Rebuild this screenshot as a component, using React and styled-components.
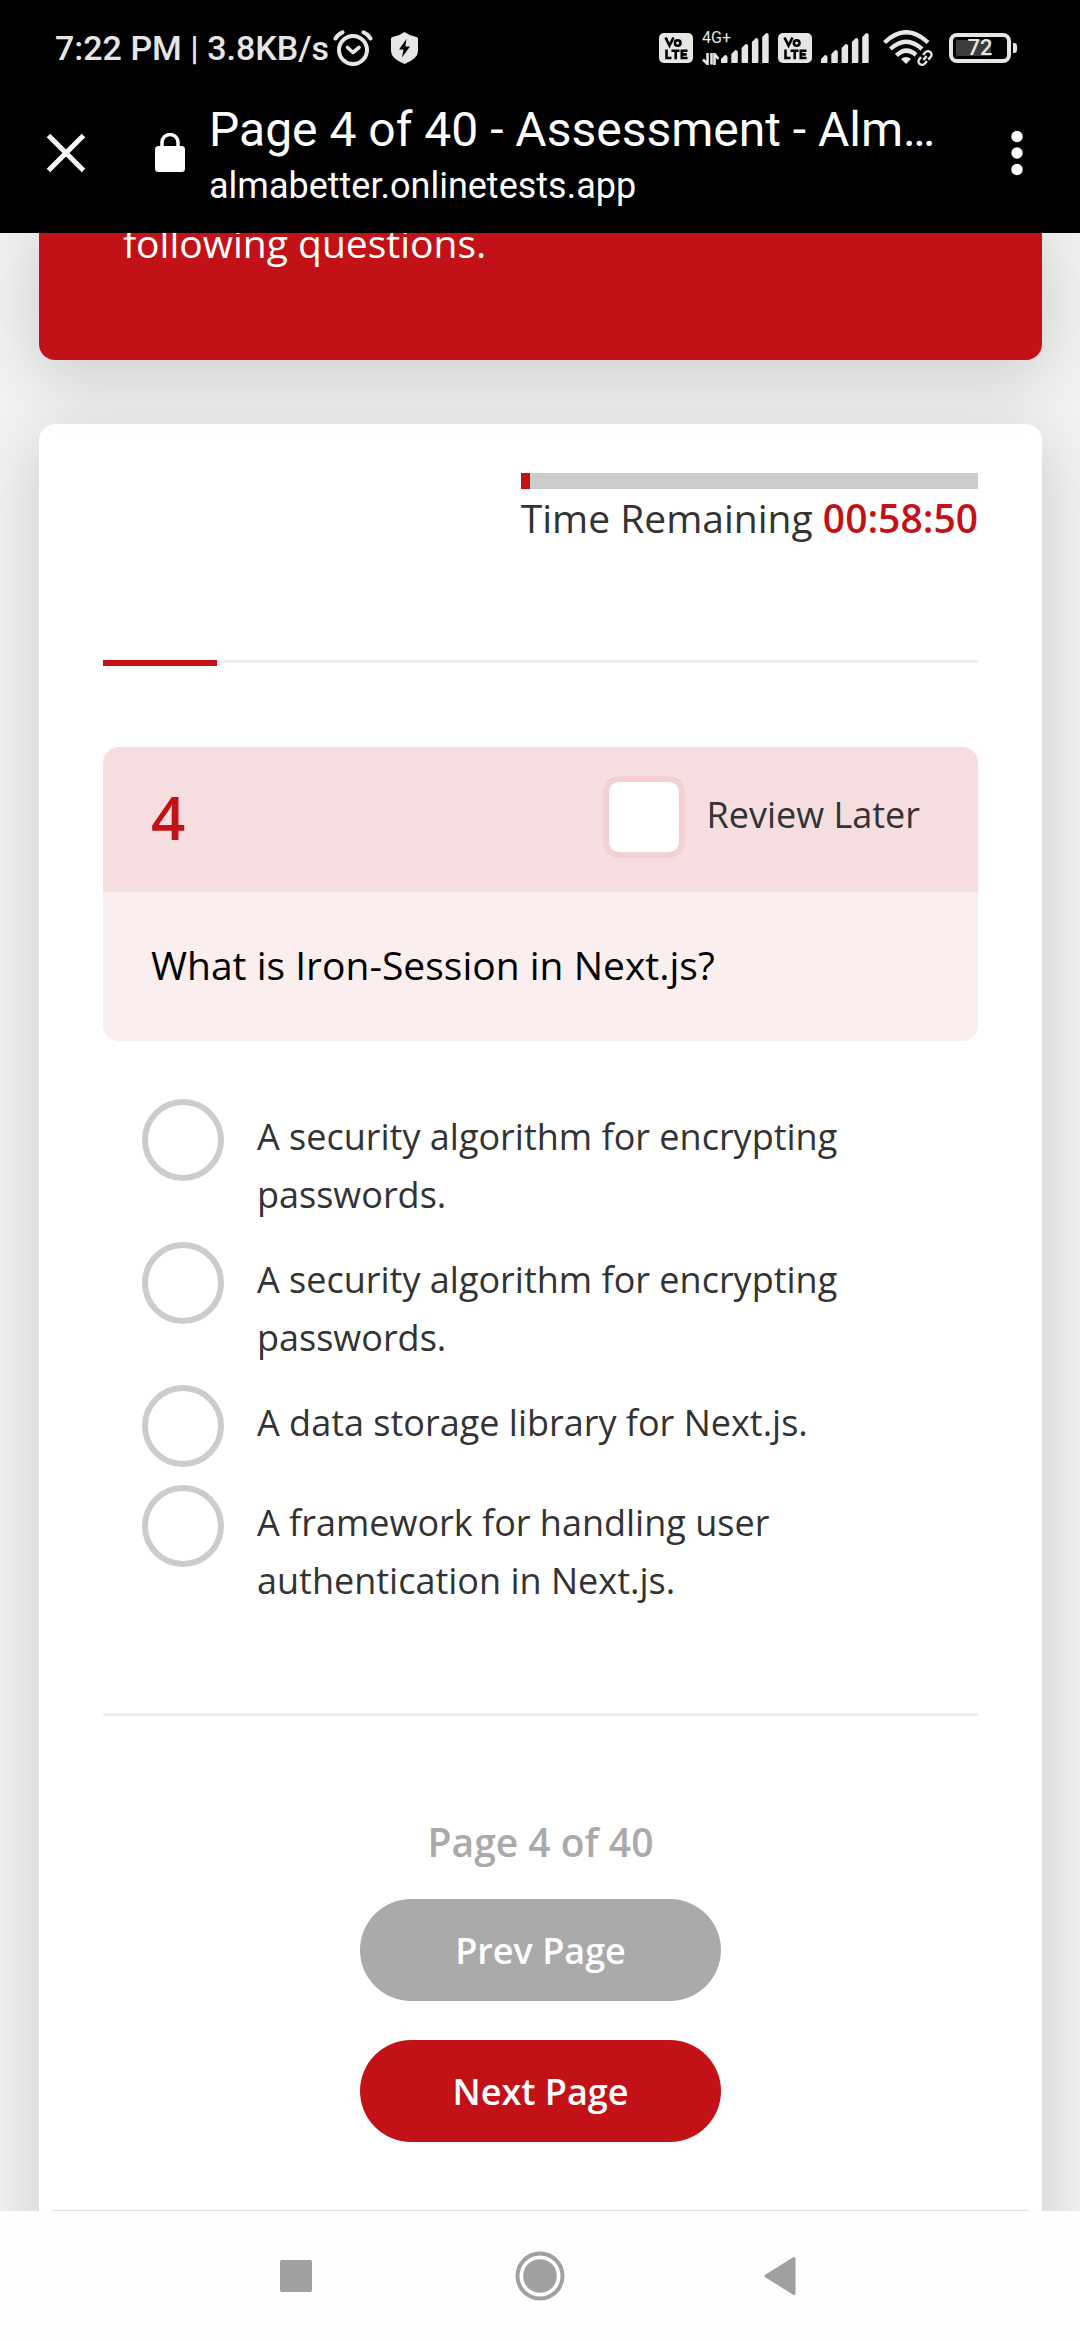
import React from "react";
import styled, { createGlobalStyle } from "styled-components";

const RED = "#c31217";
const SYSTEM = "#e6e6e6";

const GlobalStyle = createGlobalStyle`
  * { box-sizing: border-box; }
  body {
    margin: 0;
    background: #f2f2f2;
    font-family: "Open Sans", "Noto Sans", sans-serif;
    color: #333;
  }
  button { font: inherit; border: 0; margin: 0; padding: 0; background: none; cursor: pointer; }
  h1, h2, p { margin: 0; font-weight: 400; }
  svg { display: block; flex: none; }
`;

const Screen = styled.div`
  height: 100vh;
  display: flex;
  flex-direction: column;
  overflow: hidden;
`;

const StatusBar = styled.div`
  display: flex;
  align-items: center;
  justify-content: space-between;
  height: 96px;
  padding: 0 63px 0 55px;
  background: #000;
  color: ${SYSTEM};
  font-family: Roboto, sans-serif;
  font-size: 34px;
  font-weight: 500;
  line-height: 40px;
  white-space: nowrap;
`;

const StatusGroup = styled.div`
  display: flex;
  align-items: center;
  gap: ${({ $gap }) => $gap}px;
`;

const AppBar = styled.header`
  display: flex;
  align-items: center;
  height: 137px;
  padding: 0 41px 24px 44px;
  background: #000;
  color: #fff;
  font-family: Roboto, sans-serif;
`;

const IconButton = styled.button`
  display: flex;
  align-items: center;
  justify-content: center;
  width: 44px;
  height: 64px;
  color: inherit;
`;

const Address = styled.div`
  display: flex;
  align-items: center;
  flex: 1;
  gap: 24px;
  margin-left: 67px;
  min-width: 0;
`;

const AddressText = styled.div`
  display: flex;
  flex-direction: column;
  gap: 2px;
  min-width: 0;
  padding-top: 4px;
`;

const PageTitle = styled.h1`
  font-size: 48px;
  line-height: 60px;
  white-space: nowrap;
`;

const PageHost = styled.p`
  font-size: 36px;
  line-height: 48px;
`;

const Content = styled.main`
  flex: 1;
  min-height: 0;
  overflow: hidden;
  display: flex;
  flex-direction: column;
  gap: 64px;
  padding: 0 38px 0 39px;
`;

const Panel = styled.section`
  border-radius: 16px;
  box-shadow: 0 15px 66px rgba(0, 0, 0, 0.165);
`;

const Banner = styled(Panel)`
  z-index: 1;
  flex: none;
  margin-top: -19px;
  padding: 0 84px 88px;
  background: ${RED};
  color: #fff;
  font-size: 39px;
  line-height: 58px;
`;

const Sheet = styled(Panel)`
  flex: none;
  display: flex;
  flex-direction: column;
  padding: 49px 13px 0;
  background: #fff;
`;

const SheetBody = styled.div`
  display: flex;
  flex-direction: column;
  padding: 0 51px;
`;

const Timer = styled.div`
  align-self: flex-end;
  display: flex;
  flex-direction: column;
  font-size: 39px;
  line-height: 58px;
  white-space: nowrap;
`;

const TimerTrack = styled.div`
  height: 16px;
  background: #ccc;
`;

const TimerFill = styled.div`
  height: 100%;
  background: ${RED};
`;

const TimeLeft = styled.strong`
  font-weight: 600;
  color: ${RED};
`;

const Rule = styled.div`
  height: 3px;
  background: #eee;
`;

const Progress = styled.div`
  display: flex;
  align-items: flex-start;
  margin: 113px 0 81px;
`;

const ProgressDone = styled.div`
  height: 6px;
  background: ${RED};
`;

const ProgressRest = styled(Rule)`
  flex: 1;
`;

const Question = styled.section`
  overflow: hidden;
  border-radius: 16px;
  background: #faeeee;
`;

const QuestionHead = styled.div`
  display: flex;
  align-items: center;
  justify-content: space-between;
  height: 145px;
  padding: 0 58px 6px 48px;
  background: #f6dee0;
`;

const QuestionNumber = styled.span`
  color: ${RED};
  font-size: 60px;
  font-weight: 600;
  line-height: 82px;
`;

const ReviewLabel = styled.label`
  display: flex;
  align-items: center;
  gap: 21px;
  font-size: 36px;
  line-height: 58px;
`;

const ReviewText = styled.span`
  padding-bottom: 3px;
`;

const Choice = styled.input`
  appearance: none;
  flex: none;
  width: 82px;
  height: 82px;
  margin: 0;
  border: 6px solid #ccc;
  border-radius: 50%;
  background: #fff;
`;

const ReviewBox = styled(Choice)`
  border-color: #f2d1d3;
  border-radius: 16px;
`;

const QuestionText = styled.h2`
  padding: 44px 48px 47px;
  color: #000;
  font-size: 39px;
  line-height: 58px;
`;

const Options = styled.fieldset`
  display: flex;
  flex-direction: column;
  gap: 18px;
  margin: 58px 0 103px;
  padding: 0 39px;
  border: 0;
`;

const Option = styled.label`
  display: flex;
  align-items: flex-start;
  gap: 33px;
  font-size: 36px;
  line-height: 58px;
`;

const OptionText = styled.span`
  max-width: 620px;
  padding-top: 9px;
`;

const Pager = styled.nav`
  display: flex;
  flex-direction: column;
  align-items: center;
  padding: 97px 0 68px;
`;

const PageCount = styled.p`
  margin-bottom: 28px;
  color: #aaa;
  font-size: 39px;
  font-weight: 600;
  line-height: 58px;
`;

const PageButton = styled.button`
  width: 361px;
  height: 102px;
  border-radius: 51px;
  background: ${({ $primary }) => ($primary ? RED : "#aaa")};
  color: #fff;
  font-size: 36px;
  font-weight: 600;

  & + & { margin-top: 39px; }
`;

const SheetFooter = styled.footer`
  height: 160px;
  border-top: 1px solid #e3e3e3;
`;

const SystemNav = styled.nav`
  position: relative;
  z-index: 1;
  display: flex;
  justify-content: center;
  height: 129px;
  background: #fefefe;
`;

const SystemKey = styled.button`
  display: flex;
  align-items: center;
  justify-content: center;
  width: 244px;
`;

const AlarmIcon = () => (
  <svg width="40" height="36" viewBox="0 0 40 36" fill="none" stroke={SYSTEM}>
    <circle cx="20" cy="20" r="14" strokeWidth="4" />
    <path d="M14.500 17.500l5.500 5 6-5" strokeWidth="3.600" strokeLinejoin="round" strokeLinecap="round" />
    <path d="M2.500 8.500Q5 4 9.500 2.300M37.500 8.500Q35 4 30.500 2.300" strokeWidth="4" strokeLinecap="round" />
  </svg>
);

const ShieldIcon = () => (
  <svg width="27" height="32" viewBox="0 0 27 32">
    <path d="M13.500 0Q19 4 25.500 5Q27 5.300 27 7V19Q27 26.500 13.500 32Q0 26.500 0 19V7Q0 5.300 1.500 5Q8 4 13.500 0Z" fill={SYSTEM} />
    <path d="M15.500 7L8 17.500h4.500L11 25.500l8-11h-4.700Z" fill="#000" />
  </svg>
);

const VolteIcon = () => (
  <svg width="34" height="30" viewBox="0 0 34 30">
    <rect width="34" height="30" rx="5" fill={SYSTEM} />
    <g fill="none" stroke="#000" strokeWidth="2.600">
      <path d="M6.500 4.500l4 8 4-8" />
      <circle cx="18.700" cy="10" r="2.800" />
      <path d="M7.500 16.500v8.500h5M12.500 17.800h8M16.700 17.800v8.500M28.500 17.800h-5.700v7.200h5.700M22.800 21.400h5" />
    </g>
  </svg>
);

const SignalBars = () => (
  <svg width="48" height="30" viewBox="0 0 48 30" fill={SYSTEM}>
    {[8, 13, 19, 25, 30].map((h, i) => {
      const x = i * 10.3;
      return <path key={h} d={`M${x} ${30}V${30 - h + 4}L${x + 4} ${30 - h}Q${x + 6.500} ${30 - h} ${x + 6.500} ${30 - h + 2}V29Q${x + 6.500} 30 ${x + 5.500} 30Z`} />;
    })}
  </svg>
);

/* Narrower than its text: the generation label reaches over the short bars. */
const NetworkLabel = styled.span`
  display: flex;
  flex-direction: column;
  align-items: flex-start;
  gap: 8px;
  width: 10px;
  height: 34px;
  font-size: 16px;
  font-weight: 400;
  line-height: 14px;
`;

const TrafficIcon = () => (
  <svg width="17" height="12" viewBox="0 0 17 12" fill="none" stroke={SYSTEM} strokeWidth="2.600">
    <path d="M1 6.500l4.500 4.500V0M9.500 0v11.500M12.500 12V1l4 5" />
  </svg>
);

const WifiIcon = () => (
  <svg width="50" height="36" viewBox="0 0 50 36">
    <g fill="none" stroke={SYSTEM} strokeWidth="4.400">
      <path d="M1.500 12.500Q23 -8 45 12.500" />
      <path d="M7.500 19Q23 4.500 39 19" />
      <path d="M13.500 25.500Q23 16 33 25" />
    </g>
    <path d="M23 34l-5-5q5-4 10 0Z" fill={SYSTEM} />
    <g transform="rotate(-48 42 28)" stroke="#000" strokeWidth="6" fill="none">
      <rect x="34" y="24.500" width="16" height="7" rx="3.500" />
    </g>
    <g transform="rotate(-48 42 28)" stroke={SYSTEM} strokeWidth="2.400" fill="none">
      <path d="M40 24.500h-2.500a3.500 3.500 0 0 0 0 7h3.500M43 31.500h3.500a3.500 3.500 0 0 0 0-7h-3.500M39.500 28h5" />
    </g>
  </svg>
);

const Battery = styled.span`
  display: flex;
  align-items: center;
  gap: 2px;

  &::after {
    content: "";
    width: 4px;
    height: 10px;
    border-radius: 0 3px 3px 0;
    background: ${SYSTEM};
  }
`;

const BatteryShell = styled.span`
  width: 62px;
  height: 30px;
  padding: 3px;
  border: 4px solid ${SYSTEM};
  border-radius: 8px;
`;

const BatteryLevel = styled.span`
  display: flex;
  align-items: center;
  justify-content: center;
  height: 16px;
  border-radius: 2px;
  background: linear-gradient(to right, #3c3c3c 72%, #000 72%);
  font-size: 22px;
  line-height: 16px;
`;

const CloseIcon = () => (
  <svg width="44" height="44" viewBox="0 0 44 44" fill="none" stroke="#fff" strokeWidth="5">
    <path d="M4.500 4.500L39.500 39.500M39.500 4.500L4.500 39.500" />
  </svg>
);

const LockIcon = () => (
  <svg width="30" height="40" viewBox="0 0 30 40">
    <rect y="13" width="30" height="26" rx="3.500" fill="#fff" />
    <path d="M7 15V9.500a8 8 0 0 1 16 0V15" fill="none" stroke="#fff" strokeWidth="3.500" />
  </svg>
);

const MoreIcon = () => (
  <svg width="12" height="46" viewBox="0 0 12 46" fill="#fff">
    <circle cx="6" cy="6.500" r="5.700" />
    <circle cx="6" cy="23" r="5.700" />
    <circle cx="6" cy="39.500" r="5.700" />
  </svg>
);

const RecentsIcon = () => (
  <svg width="34" height="34" viewBox="0 0 34 34">
    <rect x="1" y="1" width="32" height="32" rx="2" fill="#a0a0a0" />
  </svg>
);

const HomeIcon = () => (
  <svg width="50" height="50" viewBox="0 0 50 50">
    <circle cx="25" cy="25" r="22.500" fill="none" stroke="#a0a0a0" strokeWidth="4" />
    <circle cx="25" cy="25" r="16.800" fill="#a0a0a0" />
  </svg>
);

const BackIcon = () => (
  <svg width="40" height="40" viewBox="0 0 40 40">
    <path d="M2 20L30 2.500V37.500Z" fill="#a0a0a0" stroke="#a0a0a0" strokeWidth="3" strokeLinejoin="round" />
  </svg>
);

const answers = [
  "A security algorithm for encrypting passwords.",
  "A security algorithm for encrypting passwords.",
  "A data storage library for Next.js.",
  "A framework for handling user authentication in Next.js.",
];

export default function App() {
  const timeUsed = 2;
  const surveyDone = 13;

  return (
    <Screen>
      <GlobalStyle />
      <StatusBar>
        <StatusGroup $gap={4}>
          <span>7:22 PM | 3.8KB/s</span>
          <StatusGroup $gap={18}>
            <AlarmIcon />
            <ShieldIcon />
          </StatusGroup>
        </StatusGroup>
        <StatusGroup $gap={14}>
          <StatusGroup $gap={9}>
            <VolteIcon />
            <NetworkLabel>
              4G+
              <TrafficIcon />
            </NetworkLabel>
            <SignalBars />
            <VolteIcon />
            <SignalBars />
          </StatusGroup>
          <StatusGroup $gap={16}>
            <WifiIcon />
            <Battery>
              <BatteryShell>
                <BatteryLevel>72</BatteryLevel>
              </BatteryShell>
            </Battery>
          </StatusGroup>
        </StatusGroup>
      </StatusBar>

      <AppBar>
        <IconButton aria-label="Close">
          <CloseIcon />
        </IconButton>
        <Address>
          <LockIcon />
          <AddressText>
            <PageTitle>Page 4 of 40 - Assessment - Alm…</PageTitle>
            <PageHost>almabetter.onlinetests.app</PageHost>
          </AddressText>
        </Address>
        <IconButton aria-label="More options">
          <MoreIcon />
        </IconButton>
      </AppBar>

      <Content>
        <Banner>following questions.</Banner>

        <Sheet>
          <SheetBody>
            <Timer>
              <TimerTrack>
                <TimerFill style={{ width: `${timeUsed}%` }} />
              </TimerTrack>
              <span>
                Time Remaining <TimeLeft>00:58:50</TimeLeft>
              </span>
            </Timer>

            <Progress>
              <ProgressDone style={{ width: `${surveyDone}%` }} />
              <ProgressRest />
            </Progress>

            <Question>
              <QuestionHead>
                <QuestionNumber>4</QuestionNumber>
                <ReviewLabel>
                  <ReviewBox type="checkbox" />
                  <ReviewText>Review Later</ReviewText>
                </ReviewLabel>
              </QuestionHead>
              <QuestionText>What is Iron-Session in Next.js?</QuestionText>
            </Question>

            <Options aria-label="Answers">
              {answers.map((answer, index) => (
                <Option key={index}>
                  <Choice type="radio" name="answer" value={index} />
                  <OptionText>{answer}</OptionText>
                </Option>
              ))}
            </Options>

            <Rule />

            <Pager>
              <PageCount>Page 4 of 40</PageCount>
              <PageButton>Prev Page</PageButton>
              <PageButton $primary>Next Page</PageButton>
            </Pager>
          </SheetBody>
          <SheetFooter />
        </Sheet>
      </Content>

      <SystemNav>
        <SystemKey aria-label="Recent apps">
          <RecentsIcon />
        </SystemKey>
        <SystemKey aria-label="Home">
          <HomeIcon />
        </SystemKey>
        <SystemKey aria-label="Back">
          <BackIcon />
        </SystemKey>
      </SystemNav>
    </Screen>
  );
}
